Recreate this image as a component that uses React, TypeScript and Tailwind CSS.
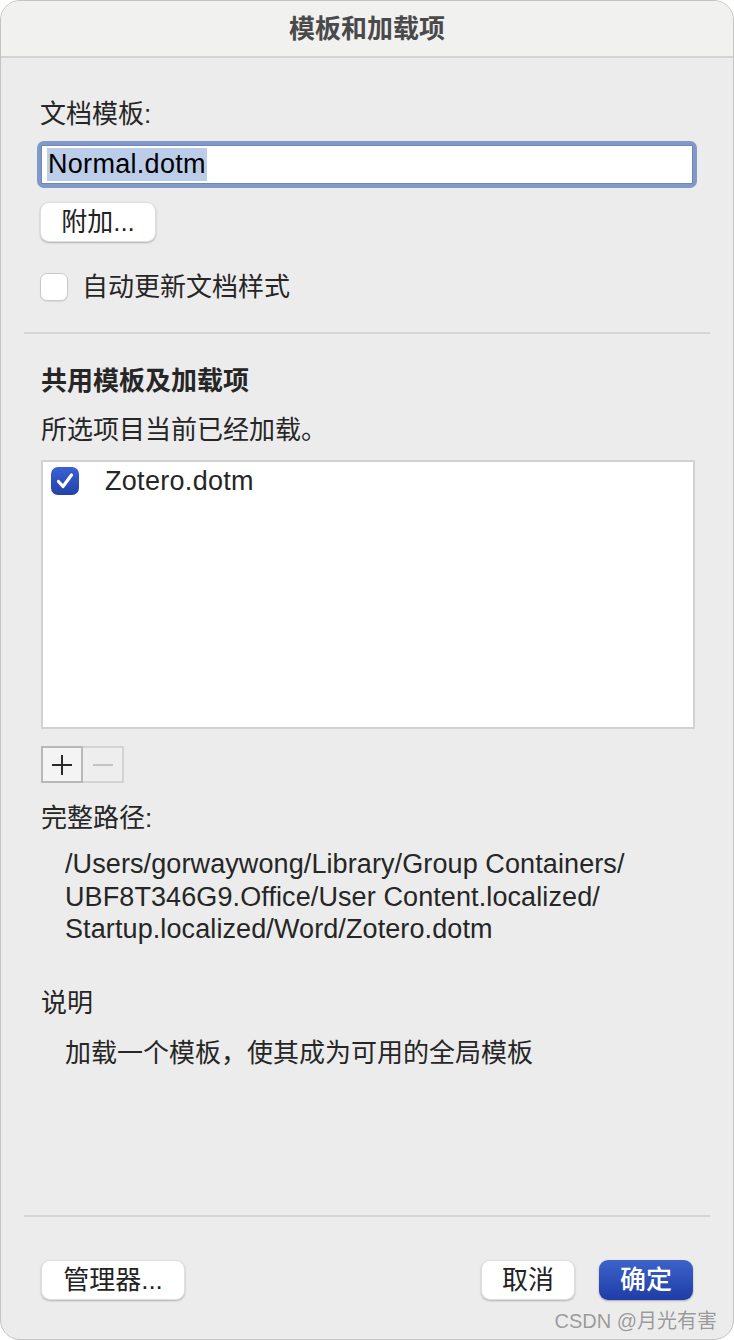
import React from "react";

const F = { fontFamily: '"Liberation Sans", "Noto Sans CJK SC", sans-serif' } as React.CSSProperties;

export default function App() {
  return (
    <div className="w-[734px] h-[1340px] bg-white" style={F}>
      <div className="w-full h-full rounded-[20px] bg-[#ececec] border border-[#c4c4c4] overflow-hidden flex flex-col text-[#262626] text-[26px] leading-[32px]">
        {/* title bar */}
        <div className="h-[57px] shrink-0 bg-[#f1f1f0] border-b-2 border-[#d4d4d4] flex items-center justify-center">
          <span className="font-bold text-[#4a4a4a] text-[26px]">模板和加载项</span>
        </div>

        {/* section 1 */}
        <div className="px-[39px]">
          <div className="mt-[40px] h-[32px]">文档模板:</div>
          <div className="mt-[11px] -ml-[3px] w-[660px] h-[47px] rounded-[7px] bg-[#8199c9] p-[4px]">
            <div className="w-full h-full bg-white border border-[#7186b8] flex items-center pl-[5px]">
              <span className="bg-[#bccde9] text-black text-[27px] leading-[33px] px-[1px] tracking-[0.3px]">Normal.dotm</span>
            </div>
          </div>
          <div className="mt-[14px] w-[116px] h-[40px] rounded-[9px] bg-white shadow-[0_1px_2px_rgba(0,0,0,0.25)] border border-[#dedede] flex items-center justify-center text-[#222]">
            附加...
          </div>
          <div className="mt-[31px] h-[28px] flex items-center">
            <div className="w-[28px] h-[28px] rounded-[7px] bg-white border border-[#c9c9c9] shadow-[0_1px_1px_rgba(0,0,0,0.08)]" />
            <span className="ml-[14px]">自动更新文档样式</span>
          </div>
        </div>

        <div className="mx-[23px] mt-[31px] h-[2px] bg-[#d5d5d5]" />

        {/* section 2 */}
        <div className="px-[40px]">
          <div className="mt-[31px] h-[32px] font-bold">共用模板及加载项</div>
          <div className="mt-[17px] h-[32px]">所选项目当前已经加载。</div>
          <div className="mt-[14px] w-[654px] h-[269px] bg-white border-2 border-[#d2d2d2] pt-[5px] pl-[8px]">
            <div className="flex items-center h-[28px]">
              <div className="w-[28px] h-[28px] rounded-[7px] bg-gradient-to-b from-[#3a62d4] to-[#2341a9] flex items-center justify-center">
                <svg width="22" height="22" viewBox="0 0 22 22" fill="none">
                  <path d="M4.5 11.5 L9 16.5 L17.5 5" stroke="white" strokeWidth="3.2" strokeLinecap="round" strokeLinejoin="round" />
                </svg>
              </div>
              <span className="ml-[26px] text-[27px] tracking-[0.3px]">Zotero.dotm</span>
            </div>
          </div>
          <div className="mt-[17px] flex h-[37px]">
            <div className="w-[42px] h-[37px] border-2 border-[#b8b8b8] bg-[#f4f4f4] flex items-center justify-center">
              <svg width="22" height="22" viewBox="0 0 22 22">
                <path d="M11 1 V21 M1 11 H21" stroke="#2a2a2a" strokeWidth="2" />
              </svg>
            </div>
            <div className="w-[41px] h-[37px] border-2 border-l-0 border-[#d3d3d3] bg-[#eeeeee] flex items-center justify-center">
              <svg width="22" height="22" viewBox="0 0 22 22">
                <path d="M1 11 H21" stroke="#c4c4c4" strokeWidth="2" />
              </svg>
            </div>
          </div>
          <div className="mt-[19px] h-[32px]">完整路径:</div>
          <div className="mt-[14px] pl-[24px] leading-[32.5px] text-[27px] tracking-[0.1px]">
            <div>/Users/gorwaywong/Library/Group Containers/</div>
            <div>UBF8T346G9.Office/User Content.localized/</div>
            <div>Startup.localized/Word/Zotero.dotm</div>
          </div>
          <div className="mt-[41px] h-[32px]">说明</div>
          <div className="mt-[18px] pl-[24px] h-[32px]">加载一个模板，使其成为可用的全局模板</div>
        </div>

        <div className="mx-[23px] mt-[146px] h-[2px] bg-[#d5d5d5]" />

        {/* buttons */}
        <div className="px-[40px] mt-[43px] flex items-center">
          <div className="w-[144px] h-[40px] rounded-[9px] bg-white shadow-[0_1px_2px_rgba(0,0,0,0.25)] border border-[#dedede] flex items-center justify-center text-[#222]">
            管理器...
          </div>
          <div className="flex-1" />
          <div className="w-[94px] h-[40px] rounded-[9px] bg-white shadow-[0_1px_2px_rgba(0,0,0,0.25)] border border-[#dedede] flex items-center justify-center text-[#222]">
            取消
          </div>
          <div className="ml-[24px] w-[94px] h-[40px] rounded-[9px] bg-gradient-to-b from-[#3d63cb] to-[#1f3ca6] shadow-[0_1px_2px_rgba(0,0,0,0.3)] flex items-center justify-center text-white font-medium">
            确定
          </div>
        </div>
        <div className="flex justify-end pr-[16px] mt-[8px]">
          <span className="text-[20px] leading-[26px] text-[#9a9a9a]" style={{ textShadow: "0 0 1px rgba(255,255,255,0.8)" }}>CSDN @月光有害</span>
        </div>
      </div>
    </div>
  );
}
